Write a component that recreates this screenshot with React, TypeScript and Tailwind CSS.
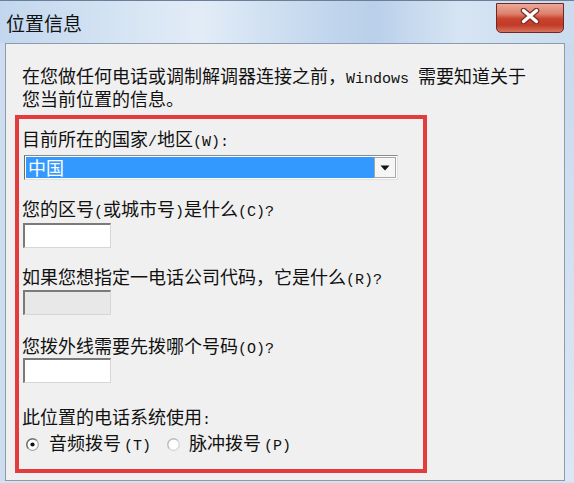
import React from "react";

const A = ({ children, cls = "" }: { children: React.ReactNode; cls?: string }) => (
  <span className={"font-['Liberation_Mono',monospace] text-[15px] " + cls}>{children}</span>
);

const Radio = ({ checked }: { checked: boolean }) => (
  <svg width="13" height="13" viewBox="0 0 13 13" className="shrink-0">
    <circle cx="6.5" cy="6.5" r="5.8" fill="#ffffff" stroke={checked ? "#a8a8a8" : "#d2d2d2"} strokeWidth="1.2" />
    <path
      d="M2.4 10.6 A5.8 5.8 0 0 1 10.6 2.4"
      fill="none"
      stroke={checked ? "#6e6e6e" : "#bdbdbd"}
      strokeWidth="1.3"
    />
    {checked && <circle cx="6.5" cy="6.5" r="2.1" fill="#111111" />}
  </svg>
);

const CloseButton = () => (
  <div className="mr-[10px] mt-[2px] w-[68px] h-[30px] rounded-b-[5px] border border-[#6e2a21] bg-[linear-gradient(180deg,#eaa99a_0%,#de806c_35%,#c9452f_52%,#c13a27_75%,#d8745d_100%)] flex items-center justify-center pb-[5px]">
    <svg width="22" height="16" viewBox="0 0 22 16">
      <path d="M4.5 2.5 L17.5 13.5 M17.5 2.5 L4.5 13.5" stroke="#7a2b20" strokeWidth="5.6" strokeLinecap="round" />
      <path d="M4.5 2.5 L17.5 13.5 M17.5 2.5 L4.5 13.5" stroke="#ffffff" strokeWidth="3.4" strokeLinecap="round" />
    </svg>
  </div>
);

const Input = ({ disabled = false }: { disabled?: boolean }) => (
  <div
    className={
      "ml-[1px] w-[88px] h-[25px] shrink-0 border-t-2 border-l-2 border-b border-r border-t-[#7a7a7a] border-l-[#7a7a7a] border-b-[#d6d6d6] border-r-[#d6d6d6] " +
      (disabled ? "bg-[#e8e8e8]" : "bg-white")
    }
  />
);

export default function App() {
  return (
    <div className="w-[574px] h-[483px] overflow-hidden bg-[#d4e2f1] text-[#111] font-['Noto_Sans_CJK_SC',sans-serif] flex flex-col">
      <div className="h-[43px] shrink-0 flex items-start justify-between border-t border-[#6b7f99] bg-[linear-gradient(90deg,#c2d7ee_0%,#d9e6f4_25%,#e2ecf7_35%,#c4d8ee_55%,#b9d0ea_65%,#d6e4f3_80%,#cbdcef_100%)]">
        <div className="pl-[6px] pt-[12px] text-[19px] leading-[19px]">位置信息</div>
        <CloseButton />
      </div>
      <div className="flex h-[438px] shrink-0">
        <div className="w-[5px] shrink-0 bg-[#cddcee]" />
        <div className="w-[560px] shrink-0 border border-[#8e9bab] bg-[#f0f0f0] flex flex-col">
          <p className="pl-[16px] pt-[22px] text-[18px] leading-[18px] whitespace-nowrap">
            在您做任何电话或调制解调器连接之前，<A>Windows </A>需要知道关于
            <br />
            您当前位置的信息。
          </p>
          <div className="ml-[9px] mt-[8px] w-[412px] h-[358px] shrink-0 border-[4px] border-[#e23c3c] flex flex-col pl-[3px] text-[18px] leading-[18px] whitespace-nowrap">
            <div className="mt-[10px] h-[18px]">
              目前所在的国家<A>/</A>地区<A>(W):</A>
            </div>
            <div className="ml-[2px] mt-[8px] w-[374px] h-[25px] shrink-0 flex border border-t-[#8a8a8a] border-l-[#6f6f6f] border-b-[#e0e0e0] border-r-[#e0e0e0] bg-white p-[1px]">
              <div className="flex-1 bg-[#3399ff] text-white text-[18px] leading-[21px] pl-[2px]">中国</div>
              <div className="w-[22px] border border-[#a6a6a6] bg-[#f6f6f6] flex items-center justify-center">
                <svg width="10" height="6" viewBox="0 0 10 6">
                  <path d="M0.5 0.5 L9.5 0.5 L5 5.5 Z" fill="#111" />
                </svg>
              </div>
            </div>
            <div className="mt-[19px] h-[18px]">
              您的区号<A>(</A>或城市号<A>)</A>是什么<A>(C)?</A>
            </div>
            <div className="mt-[6px]">
              <Input />
            </div>
            <div className="mt-[19px] h-[18px]">
              如果您想指定一电话公司代码，它是什么<A>(R)?</A>
            </div>
            <div className="mt-[5px]">
              <Input disabled />
            </div>
            <div className="mt-[21px] h-[18px]">
              您拨外线需要先拨哪个号码<A>(O)?</A>
            </div>
            <div className="mt-[4px]">
              <Input />
            </div>
            <div className="mt-[24px] h-[18px]">
              此位置的电话系统使用<A>:</A>
            </div>
            <div className="mt-[9px] h-[20px] flex items-center leading-[20px]">
              <div className="ml-[4px]">
                <Radio checked />
              </div>
              <span className="ml-[10px]">
                音频拨号<A cls="text-[14px] ml-[3px]">(T)</A>
              </span>
              <div className="ml-[16px]">
                <Radio checked={false} />
              </div>
              <span className="ml-[9px]">
                脉冲拨号<A cls="text-[14px] ml-[3px]">(P)</A>
              </span>
            </div>
          </div>
        </div>
        <div className="flex-1 bg-[linear-gradient(180deg,#c9daee_0%,#dbe7f4_100%)]" />
      </div>
    </div>
  );
}
